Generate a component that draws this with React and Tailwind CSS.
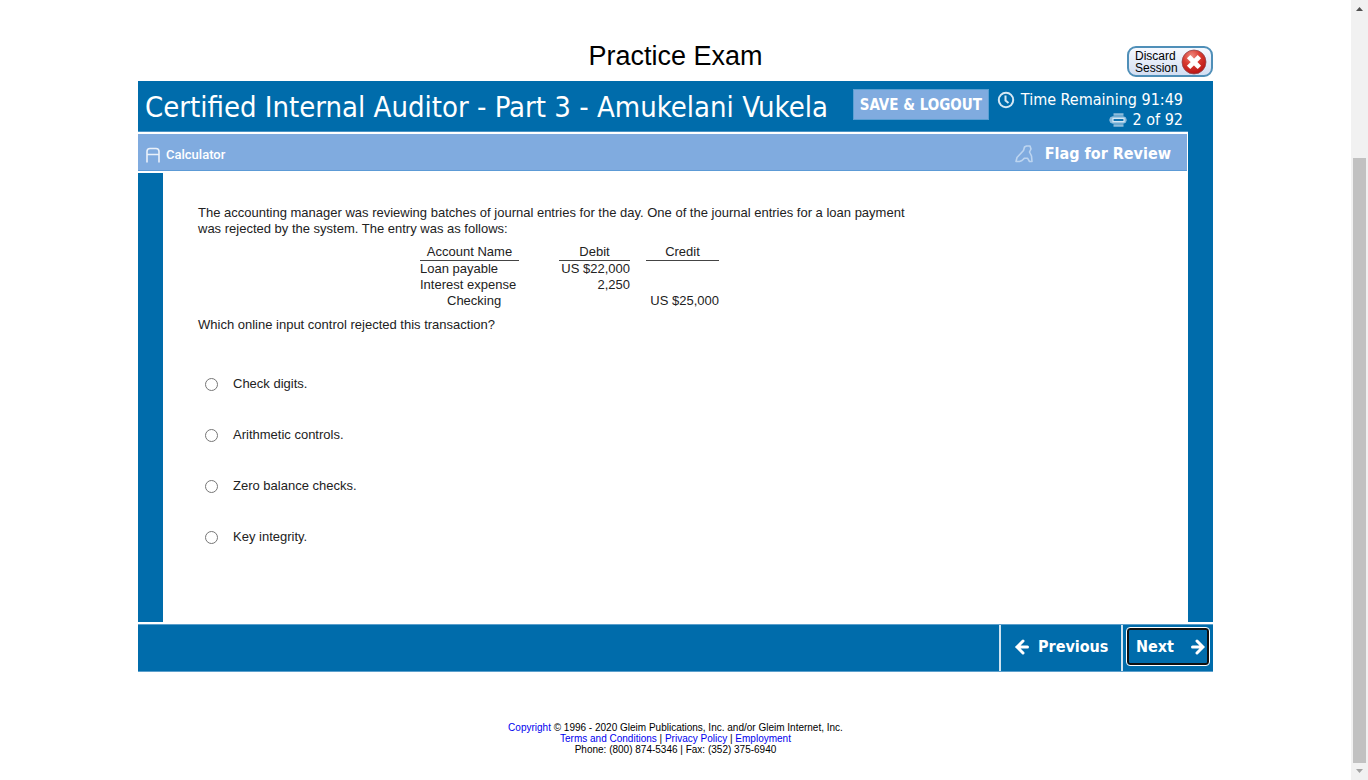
import React from "react";

const answers = ["Check digits.", "Arithmetic controls.", "Zero balance checks.", "Key integrity."];

function DiscardIcon() {
  return (
    <svg viewBox="0 0 26 26" className="size-[26px] shrink-0" aria-hidden="true">
      <defs>
        <radialGradient id="discard-red" cx="0.4" cy="0.25" r="0.8">
          <stop offset="0" stopColor="#ee8a80" />
          <stop offset="0.45" stopColor="#d93a30" />
          <stop offset="1" stopColor="#b50f10" />
        </radialGradient>
      </defs>
      <circle cx="13" cy="13" r="12" fill="url(#discard-red)" stroke="#8f4a50" strokeWidth="0.8" />
      <path d="M9.3 9.3 L16.7 16.7 M16.7 9.3 L9.3 16.7" stroke="#fff" strokeWidth="4.8" strokeLinecap="square" />
    </svg>
  );
}

function ClockIcon() {
  return (
    <svg viewBox="0 0 18 18" className="size-[18px]" fill="none" stroke="#d6e8f4" aria-hidden="true">
      <circle cx="9" cy="9" r="7.2" strokeWidth="2" />
      <path d="M8.5 4.5 V9.5 L11.5 12" strokeWidth="2" />
    </svg>
  );
}

function PagesIcon() {
  return (
    <svg viewBox="0 0 18 14" className="h-[14px] w-[18px]" fill="none" aria-hidden="true">
      <path d="M4.5 1.5 H14.5 M4.5 12.5 H14.5" stroke="#8dbcdc" strokeWidth="2.4" />
      <rect x="0.8" y="3.8" width="16.4" height="6.4" rx="3" fill="#8dbcdc" stroke="#8dbcdc" strokeWidth="1" />
      <path d="M4 5.3 H15 V8.7 H4 Z" fill="#0d72b0" stroke="#d3e6f3" strokeWidth="1.2" />
    </svg>
  );
}

function CalculatorIcon() {
  return (
    <svg viewBox="0 0 14 16" className="h-4 w-[14px]" fill="none" stroke="#eaf1fa" strokeWidth="1.6" aria-hidden="true">
      <path d="M1 15.5 V4.5 Q1 1.5 4 1.5 H10 Q13 1.5 13 4.5 V15.5 M1 7.5 H13" />
    </svg>
  );
}

function FlagIcon() {
  return (
    <svg viewBox="0 0 18 18" className="size-[18px]" fill="none" stroke="#bdd5f0" strokeWidth="1.6" strokeLinejoin="round" aria-hidden="true">
      <path d="M1 16.5 L2 12.5 L8.5 5.5 L9.5 2 L11.5 1 H15 L16 4 L14.5 7 L16.5 11 L17 16.5 H14.5 L12.5 13.2 H9.5 L7 15.5 L4.5 16.5 Z" />
    </svg>
  );
}

function ArrowIcon({ left }) {
  return (
    <svg viewBox="0 0 16 18" className="h-[18px] w-4" fill="none" stroke="#fff" strokeWidth="3" strokeLinecap="round" aria-hidden="true">
      {left ? <path d="M9 3 L3 9 L9 15 M3.5 9 H13.5" /> : <path d="M8 3 L14 9 L8 15 M13.5 9 H3.5" />}
    </svg>
  );
}

function Header() {
  return (
    <header className="flex h-[51px] items-start justify-between border-b border-[#4b93c4] bg-[#006cab] pl-[7px] pr-[5px] text-white">
      <h2 className="pt-2 font-['DejaVu_Sans_Condensed','DejaVu_Sans',sans-serif] text-[29px] leading-9 whitespace-nowrap">
        Certified Internal Auditor - Part 3 - Amukelani Vukela
      </h2>
      <div className="flex gap-2 pt-2">
        <button className="h-[31px] w-[136px] border border-[#5b9fd2] bg-[#80abdf] pt-px font-['DejaVu_Sans_Condensed','DejaVu_Sans',sans-serif] text-[15px] font-bold whitespace-nowrap">
          SAVE &amp; LOGOUT
        </button>
        <div className="flex flex-col items-end pt-px font-['DejaVu_Sans_Condensed','DejaVu_Sans',sans-serif] text-base leading-5 whitespace-nowrap">
          <div className="flex items-center gap-1.5"><ClockIcon />Time Remaining 91:49</div>
          <div className="flex items-center gap-1.5"><PagesIcon />2 of 92</div>
        </div>
      </div>
    </header>
  );
}

function Toolbar() {
  return (
    <div className="mt-0.5 mr-px flex h-[37px] items-center justify-between border-b border-[#5d9bd6] bg-[#80abdf] pr-4 pl-2 text-white">
      <button className="flex items-center gap-1.5 pt-1.5 font-['Roboto',sans-serif] text-[13px] font-medium">
        <CalculatorIcon />Calculator
      </button>
      <button className="flex items-center gap-3 pt-1 font-['DejaVu_Sans_Condensed','DejaVu_Sans',sans-serif] text-base font-bold">
        <FlagIcon />Flag for Review
      </button>
    </div>
  );
}

function EntryTable() {
  return (
    <table className="ml-[222px] leading-4 whitespace-nowrap">
      <thead>
        <tr>
          <th className="w-[99px] border-b border-[#444] p-0 pt-px font-normal">Account Name</th>
          <td className="w-10 p-0"><div className="w-10" /></td>
          <th className="w-[71px] border-b border-[#444] p-0 pt-px font-normal"><div className="w-[71px]">Debit</div></th>
          <td className="w-4 p-0"><div className="w-4" /></td>
          <th className="w-[73px] border-b border-[#444] p-0 pt-px font-normal"><div className="w-[73px]">Credit</div></th>
        </tr>
      </thead>
      <tbody>
        <tr>
          <td className="p-0">Loan payable</td><td />
          <td className="p-0 text-right">US $22,000</td><td /><td />
        </tr>
        <tr>
          <td className="p-0">Interest expense</td><td />
          <td className="p-0 text-right">2,250</td><td /><td />
        </tr>
        <tr>
          <td className="p-0 pl-[27px]">Checking</td><td /><td /><td />
          <td className="p-0 text-right">US $25,000</td>
        </tr>
      </tbody>
    </table>
  );
}

function Question() {
  return (
    <section className="h-[449px] flex-1 bg-white pt-8 pl-[35px] text-[13px] text-[#222]">
      <p className="max-w-[726px] leading-4">
        The accounting manager was reviewing batches of journal entries for the day. One of the journal entries for a loan payment was rejected by the system. The entry was as follows:
      </p>
      <div className="mt-1.5"><EntryTable /></div>
      <p className="mt-2 leading-4">Which online input control rejected this transaction?</p>
      <fieldset className="mt-[43px] flex flex-col gap-[35px]">
        {answers.map((a, i) => (
          <label key={a} className="flex h-4 items-center gap-[15px] pl-[7px] leading-4">
            <input type="radio" name="answer" id={"answer-" + i} className="m-0 size-[13px]" />
            {a}
          </label>
        ))}
      </fieldset>
    </section>
  );
}

function NavBar() {
  return (
    <nav className="mt-0.5 flex h-12 justify-end border-y border-[#5b9fcc] bg-[#006cab] font-['DejaVu_Sans_Condensed','DejaVu_Sans',sans-serif] text-base font-bold text-white">
      <button className="flex w-[122px] items-center gap-2 border-l-2 border-[#cfe3f0] pb-0.5 pl-[13px]">
        <ArrowIcon left />Previous
      </button>
      <div className="w-[92px] border-l-2 border-[#cfe3f0] p-1 pt-[3px]">
        <button className="flex h-[37px] w-full items-center justify-between rounded-[3px] border-2 border-[#101010] pr-0.5 pl-[7px] outline outline-white">
          Next<ArrowIcon />
        </button>
      </div>
    </nav>
  );
}

function ScrollRail() {
  return (
    <aside className="flex w-[17px] shrink-0 flex-col items-center bg-[#f1f1f1]">
      <svg viewBox="0 0 17 17" className="size-[17px]" aria-hidden="true"><path d="M5 11 L8.5 7 L12 11 Z" fill="#505050" /></svg>
      <div className="flex-[141]" />
      <div className="w-[13px] flex-[606] bg-[#c1c1c1]" />
      <svg viewBox="0 0 17 17" className="size-[17px]" aria-hidden="true"><path d="M5 6 L8.5 10 L12 6 Z" fill="#a3a3a3" /></svg>
    </aside>
  );
}

export default function App() {
  return (
    <div className="flex min-h-screen bg-white font-['Liberation_Sans',Arial,sans-serif]">
      <main className="flex-1">
        <div className="mx-auto w-full max-w-[1075px]">
          <div className="grid h-[81px] grid-cols-[1fr_auto_1fr] items-end">
            <h1 className="col-start-2 pb-[9px] text-[27px] leading-8 text-black">Practice Exam</h1>
            <button className="mb-1 flex h-[31px] w-[86px] items-center justify-between justify-self-end rounded-[9px] border-2 border-[#4f8fb8] bg-linear-to-b from-[#f6f9ff] to-[#d3def2] pr-1 pl-1.5 text-left text-xs leading-3 text-black">
              <span>Discard<br />Session</span>
              <DiscardIcon />
            </button>
          </div>
          <div className="flex">
            <div className="flex-1">
              <Header />
              <Toolbar />
              <div className="mt-0.5 flex">
                <div className="w-[25px] bg-[#006cab]" />
                <Question />
              </div>
            </div>
            <div className="w-[25px] bg-[#006cab]" />
          </div>
          <NavBar />
          <footer className="mt-[50px] text-center text-[10px] leading-[11px] text-black">
            <p><a href="#copyright" className="text-[#0000ee]">Copyright</a> © 1996 - 2020 Gleim Publications, Inc. and/or Gleim Internet, Inc.</p>
            <p>
              <a href="#terms" className="text-[#0000ee]">Terms and Conditions</a> | <a href="#privacy" className="text-[#0000ee]">Privacy Policy</a> | <a href="#employment" className="text-[#0000ee]">Employment</a>
            </p>
            <p>Phone: (800) 874-5346 | Fax: (352) 375-6940</p>
          </footer>
        </div>
      </main>
      <ScrollRail />
    </div>
  );
}
